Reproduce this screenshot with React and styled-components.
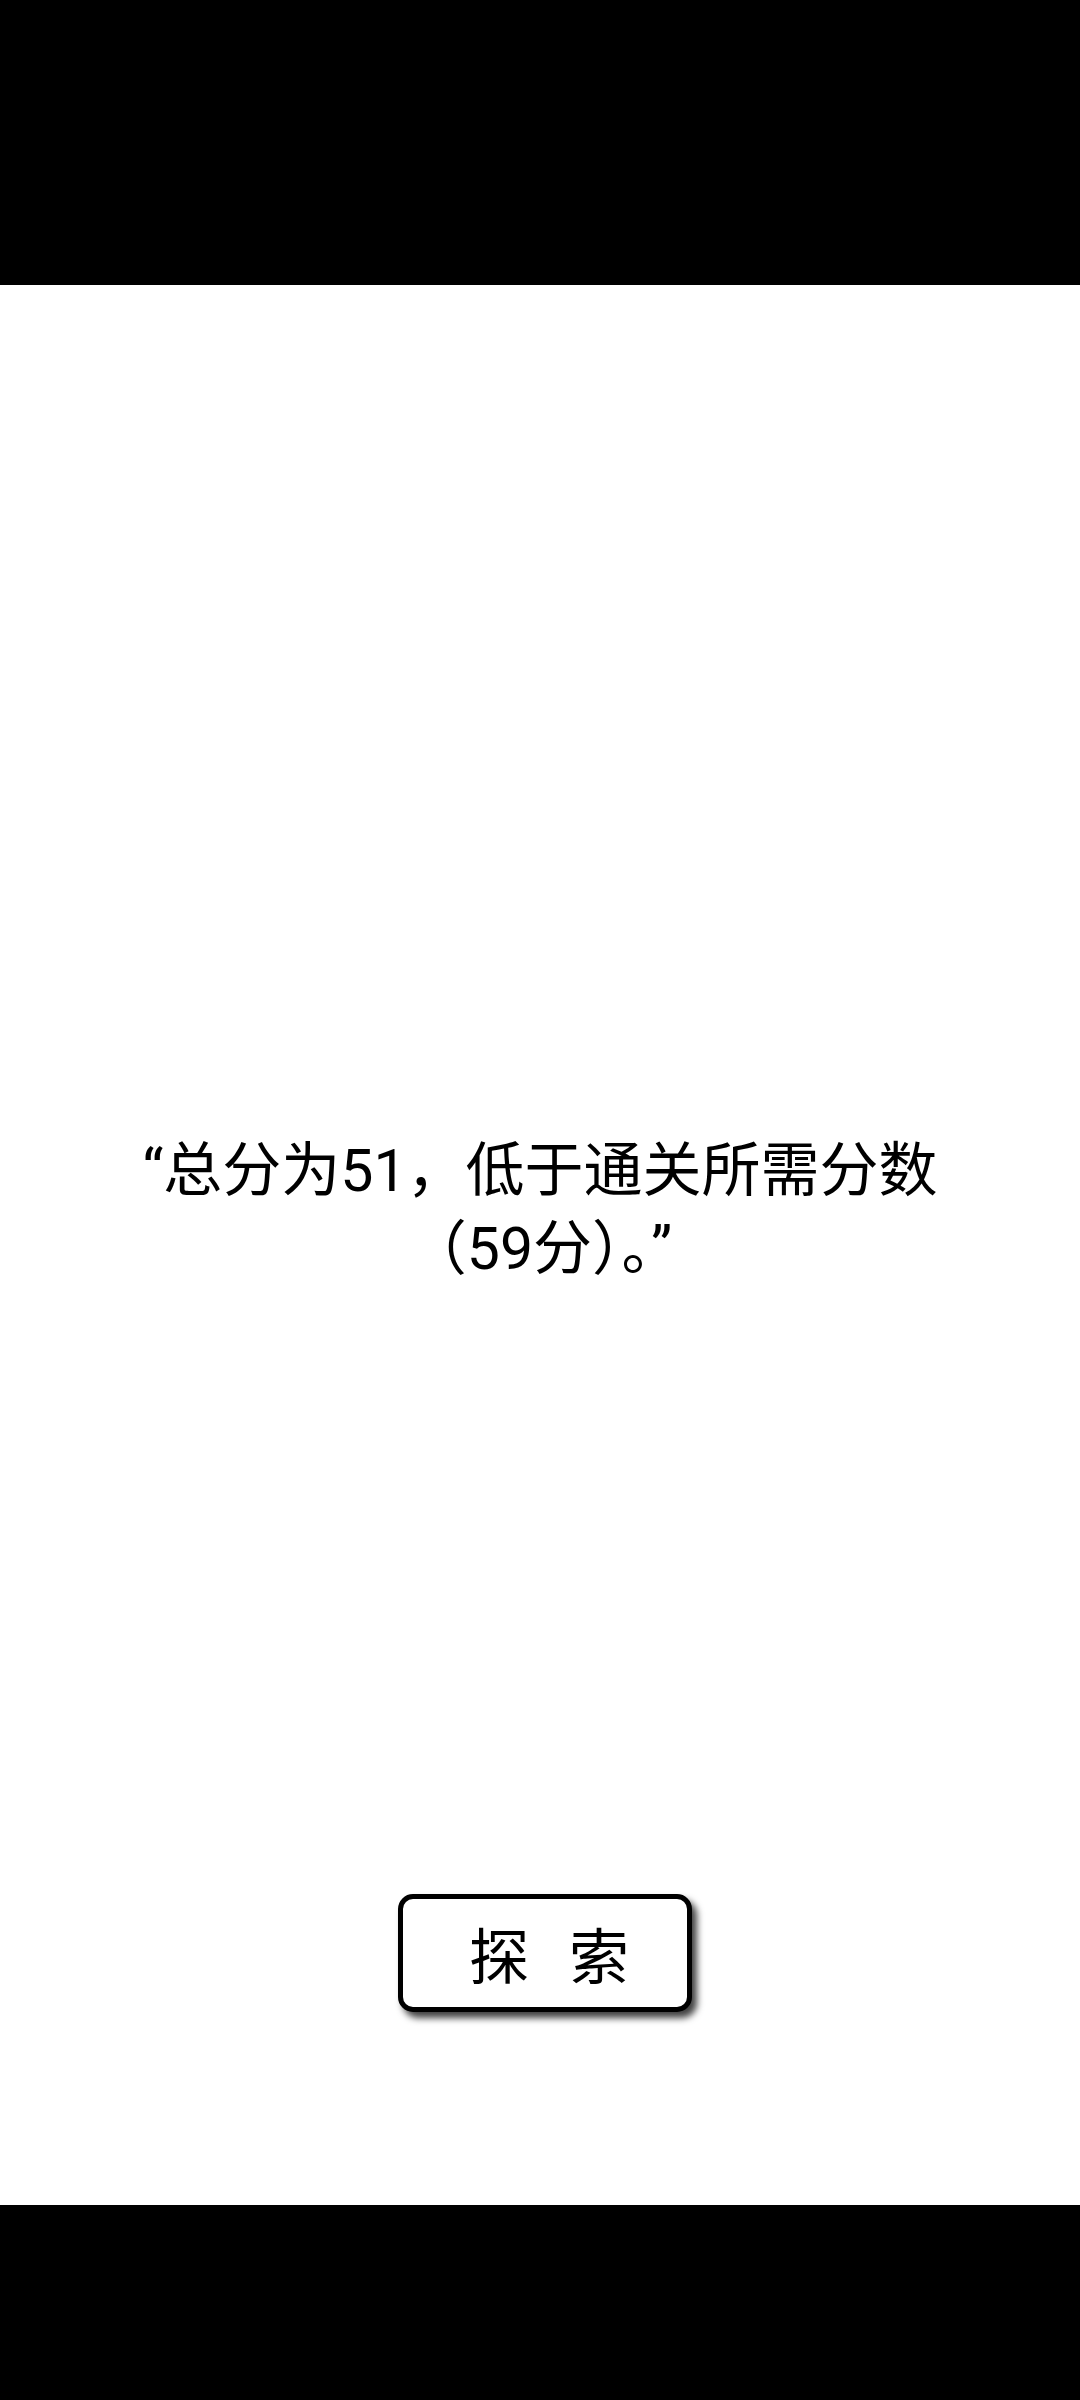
import React from "react";
import styled, { createGlobalStyle } from "styled-components";

const GlobalStyle = createGlobalStyle`
  html, body {
    margin: 0;
    padding: 0;
    background: #000;
  }
  body {
    font-family: "Roboto", "Noto Sans CJK SC", sans-serif;
  }
`;

const Screen = styled.div`
  width: 1080px;
  height: 2400px;
  display: flex;
  flex-direction: column;
  background: #000;
`;

const Bar = styled.div`
  height: ${(p) => p.$h}px;
  background: #000;
  flex: none;
`;

const Content = styled.main`
  flex: 1;
  background: #fff;
  display: flex;
  flex-direction: column;
  align-items: center;
  padding-top: 847px;
  box-sizing: border-box;
`;

const Message = styled.p`
  margin: 0;
  max-width: 880px;
  font-family: "Roboto", "Noto Sans CJK SC", sans-serif;
  font-size: 59px;
  line-height: 78px;
  color: #000;
  text-align: center;
`;

const ExploreButton = styled.button`
  margin: 606px 0 0 10px;
  width: 294px;
  height: 118px;
  box-sizing: border-box;
  border: 5px solid #000;
  border-radius: 15px;
  background: #fff;
  box-shadow: 5px 6px 7px rgba(0, 0, 0, 0.75);
  display: flex;
  align-items: center;
  justify-content: center;
  gap: 40px;
  padding: 0 0 0 8px;
  font-family: "Noto Sans CJK SC", sans-serif;
  font-size: 60px;
  color: #000;
  cursor: pointer;
`;

const Glyph = styled.span`
  display: block;
  line-height: 1;
`;

export default function App() {
  return (
    <>
      <GlobalStyle />
      <Screen>
        <Bar $h={285} />
        <Content>
          <Message>“总分为51，低于通关所需分数（59分）。”</Message>
          <ExploreButton>
            <Glyph>探</Glyph>
            <Glyph>索</Glyph>
          </ExploreButton>
        </Content>
        <Bar $h={195} />
      </Screen>
    </>
  );
}
